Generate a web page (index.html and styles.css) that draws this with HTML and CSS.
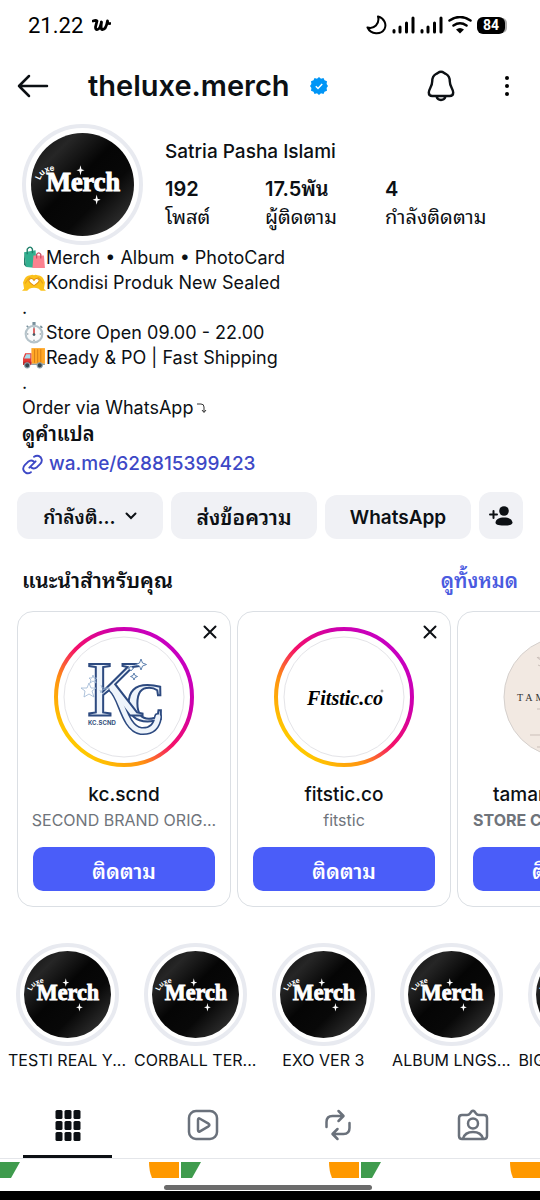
FILE: index.html
```html
<!DOCTYPE html>
<html lang="th">
<head>
<meta charset="utf-8">
<meta name="viewport" content="width=device-width, initial-scale=1">
<title>theluxe.merch</title>
<link rel="stylesheet" href="styles.css">
</head>
<body>
<svg class="defs" width="0" height="0" aria-hidden="true">
  <defs>
    <linearGradient id="story" x1="0.15" y1="0.85" x2="0.85" y2="0.15">
      <stop offset="0" stop-color="#ffc800"/><stop offset="0.25" stop-color="#ff9210"/>
      <stop offset="0.5" stop-color="#f5106a"/><stop offset="0.78" stop-color="#d000a8"/><stop offset="1" stop-color="#c800c0"/>
    </linearGradient>
    <linearGradient id="ink" x1="0" y1="0" x2="1" y2="1">
      <stop offset="0" stop-color="#0c0c0c"/><stop offset="0.22" stop-color="#262626"/><stop offset="0.45" stop-color="#050505"/>
      <stop offset="0.65" stop-color="#080808"/><stop offset="0.85" stop-color="#292929"/><stop offset="1" stop-color="#151515"/>
    </linearGradient>
    <symbol id="merch" viewBox="0 0 102 102">
      <circle cx="51" cy="51" r="51" fill="url(#ink)"/>
      <path id="arc" d="M9 47Q12 36 30 37" fill="none"/>
      <text class="logo-luxe"><textPath href="#arc">Luxe</textPath></text>
      <text class="logo-merch" x="15" y="57">Merch</text>
      <path d="M49 32l1 4 3 1-3 1-1 4-1-4-3-1 3-1zM65 61l1 4 3 1-3 1-1 4-1-4-3-1 3-1z" fill="#fff"/>
    </symbol>
    <symbol id="close" viewBox="0 0 14 14"><path d="M1.500 1.500l11 11M12.500 1.500l-11 11" fill="none" stroke="#0c1014" stroke-width="2" stroke-linecap="round"/></symbol>
    <symbol id="bars" viewBox="0 0 23 18"><path d="M2 14.500v1.500M8 11v5M14.500 7v9M21 2v14" stroke="#000" stroke-width="3" stroke-linecap="round"/></symbol>
  </defs>
</svg>
<div class="app">
  <div class="status">
    <span class="clock">21.22</span>
    <svg class="carrier" width="19" height="13" viewBox="0 0 19 13"><path d="M1 2q3-1 4 0L3.500 8q0 3 2 2.500Q8 10 9.500 3 8.500 10 10 10.500 14 11 15.500 2q0 3 2.500 2.500" fill="none" stroke="#000" stroke-width="2.800" stroke-linecap="round" stroke-linejoin="round"/></svg>
    <div class="status-icons">
      <svg width="21" height="20" viewBox="0 0 21 20"><path d="M12 1.500C18 3 21 9 18.500 14 15 20 5 20 1.500 12.500 8 14.500 14 9 12 1.500z" fill="none" stroke="#000" stroke-width="2" stroke-linejoin="round"/></svg>
      <svg width="23" height="18"><use href="#bars"/></svg>
      <svg width="23" height="18"><use href="#bars"/></svg>
      <svg width="24" height="18" viewBox="0 0 24 18"><path d="M1.500 4.500Q12-2.500 22.500 4.500M5.500 9.500Q12 5 18.500 9.500" fill="none" stroke="#000" stroke-width="2.500" stroke-linecap="round"/><path d="M8 13.500q4-3 8 0L12 17.500z"/></svg>
      <span class="battery">84</span>
    </div>
  </div>

  <header class="topbar">
    <button class="icon-btn" aria-label="Back"><svg width="32" height="24" viewBox="0 0 32 24"><path d="M12 2L2 12l10 10M2 12h28" fill="none" stroke="#0c1014" stroke-width="2.500" stroke-linecap="round" stroke-linejoin="round"/></svg></button>
    <h1 class="handle">theluxe.merch</h1>
    <svg class="verified" width="18" height="18" viewBox="0 0 18 18"><path d="M9 0l2 1.700L13.500.900l1 2.400 2.500.900-.400 2.700L18 9l-1.400 2.100.400 2.700-2.500.900-1 2.400-2.500-.800L9 18l-2-1.700-2.500.800-1-2.400-2.500-.900.400-2.700L0 9l1.400-2.100L1 4.200l2.500-.900 1-2.400L7 1.700z" fill="#0095f6"/><path d="M5.800 9.300l2.200 2.200 4.200-4.600" fill="none" stroke="#fff" stroke-width="1.500"/></svg>
    <button class="icon-btn bell" aria-label="Notifications"><svg width="28" height="32" viewBox="0 0 28 32"><path d="M14 1.800C11.500 1.800 11 3.200 9 4 6.200 5.500 5.200 8 5.200 11.500 5.200 16.500 1.800 19 1.800 22.500c0 2 1 3.500 3.500 3.500h17.400c2.500 0 3.500-1.500 3.500-3.500 0-3.500-3.400-6-3.400-11 0-3.500-1-6-3.800-7.500C17 3.200 16.500 1.800 14 1.800zM9.500 26.500q1 3.500 4.500 3.500t4.500-3.500" fill="none" stroke="#0c1014" stroke-width="2.400" stroke-linejoin="round"/></svg></button>
    <button class="icon-btn" aria-label="More"><svg width="6" height="22" viewBox="0 0 6 22"><circle cx="3" cy="3" r="2"/><circle cx="3" cy="11" r="2"/><circle cx="3" cy="19" r="2"/></svg></button>
  </header>

  <section class="profile">
    <div class="avatar"><svg viewBox="0 0 102 102"><use href="#merch"/></svg></div>
    <div class="facts">
      <h2 class="name">Satria Pasha Islami</h2>
      <dl class="stats">
        <div class="stat"><dd>192</dd><dt>โพสต์</dt></div>
        <div class="stat"><dd>17.5พัน</dd><dt>ผู้ติดตาม</dt></div>
        <div class="stat"><dd>4</dd><dt>กำลังติดตาม</dt></div>
      </dl>
    </div>
  </section>

  <section class="bio">
    <p><svg class="emoji" viewBox="0 0 23 22"><path d="M2 6l11-2 1 17-10-1z" fill="#32b090"/><path d="M2 6l2 14-2-2z" fill="#187862"/><path d="M5 8V3q3-4 5 0v4" fill="none" stroke="#20806a" stroke-width="1.300"/><path d="M11 9h10l1 12H10z" fill="#fb8290"/><path d="M14 12V8q2-3 4 0v4" fill="none" stroke="#c94d62" stroke-width="1.200"/></svg>Merch • Album • PhotoCard</p>
    <p><svg class="emoji" viewBox="0 0 23 22"><path d="M1 11Q3 4 8 4q2-1 3.500 0Q13 3 15 4q5 0 7 7l-1 6 2 2h-5l-2-2q-4.500-2-9 0l-2 2H0l2-2z" fill="#fcc21b"/><path d="M11.500 14Q5 10 7 8q2.500-2 4.500 1 2-3 4.500-1 2 2-4.500 6z" fill="#fff" stroke="#e39210"/><path d="M3 12q2-4 5-6M20 12q-2-4-5-6" fill="none" stroke="#e8a01b"/></svg>Kondisi Produk New Sealed</p>
    <p>.</p>
    <p><svg class="emoji" viewBox="0 0 23 22"><path d="M10 1h3v3h-3zM4 5l1-1 2 2-1 1zM17 6l1-2 2 2-1 1z" fill="#78909c"/><circle cx="11.500" cy="12.500" r="8" fill="#fafafa" stroke="#b5c3ca" stroke-width="2"/><path d="M11.500 7v6" stroke="#d43c3c" stroke-width="1.500"/><path d="M11.500 6v1M11.500 18v1M5 12.500h1M17 12.500h1" stroke="#455a64"/><circle cx="11.500" cy="13" r="1.300" fill="#455a64"/></svg>Store Open 09.00 - 22.00</p>
    <p><svg class="emoji" viewBox="0 0 23 22"><path d="M9 2h13v15H9z" fill="#ffa726"/><path d="M12 3v13M15 3v13M18 3v13" stroke="#d98218"/><path d="M3 7h6v11H1v-6z" fill="#e53935"/><path d="M4 8h4v4H2z" fill="#a7dbea"/><path d="M1 15h8v3H1z" fill="#c62828"/><path d="M9 17h13v1H9z" fill="#78909c"/><g fill="#37474f" stroke="#90a4ae"><circle cx="5" cy="18.500" r="2.500"/><circle cx="17" cy="18.500" r="2.500"/></g></svg>Ready &amp; PO | Fast Shipping</p>
    <p>.</p>
    <p>Order via WhatsApp<svg class="turn" width="12" height="12" viewBox="0 0 12 12"><path d="M2 2h4q3 0 3 3v5M7 8l2 2.500L11 8" fill="none" stroke="#333" stroke-width="1"/></svg></p>
    <button class="translate">ดูคำแปล</button>
    <a class="site" href="#"><svg width="21" height="21" viewBox="0 0 20 20"><path d="M8.500 17.300C5.500 19.500 2 18 1.300 15c-.5-2 .4-3.500 1.500-4.600l2.700-2.700C7.500 6 9.500 6 11 7M11.500 2.700C14.500.5 18 2 18.700 5c.5 2-.4 3.500-1.500 4.600l-2.700 2.700c-2 1.700-4 1.700-5.500.7M7 13l6-6" fill="none" stroke="#3d48c6" stroke-width="1.800" stroke-linecap="round"/></svg>wa.me/628815399423</a>
  </section>

  <div class="actions">
    <button class="btn">กำลังติ...<svg class="chevron" width="12" height="8" viewBox="0 0 12 8"><path d="M1.500 1.500L6 6l4.500-4.500" fill="none" stroke="#0c1014" stroke-width="2" stroke-linecap="round"/></svg></button>
    <button class="btn btn-message">ส่งข้อความ</button>
    <button class="btn btn-short">WhatsApp</button>
    <button class="btn btn-square" aria-label="Suggestions"><svg width="24" height="20" viewBox="0 0 24 20"><circle cx="15" cy="5" r="4.800" fill="#0c1014"/><path d="M6.500 16.500C7 13 10 11.500 15 11.500s8 1.500 8.500 5c0 2-2 3-8.500 3s-8.500-1-8.500-3z" fill="#0c1014"/><path d="M4.500 5v7M1 8.500h7" stroke="#0c1014" stroke-width="2" stroke-linecap="round"/></svg></button>
  </div>

  <div class="section-head">
    <h2 class="section-title">แนะนำสำหรับคุณ</h2>
    <a class="see-all" href="#">ดูทั้งหมด</a>
  </div>

  <div class="cards">
    <article class="card">
      <button class="dismiss" aria-label="Dismiss"><svg width="14" height="14"><use href="#close"/></svg></button>
      <svg class="portrait" viewBox="0 0 140 140"><circle cx="70" cy="70" r="68" fill="#fff" stroke="url(#story)" stroke-width="4"/><circle cx="70" cy="70" r="60" fill="#fff" stroke="#e4e4e8"/>
        <path d="M58 62C68 70 70 101 87 104q15 1 17-14" fill="none" stroke="#2d4a80" stroke-width="8" stroke-linecap="round"/>
        <text class="kc kc-c" x="72" y="94">C</text><text class="kc kc-k" x="33" y="88">K</text>
        <path d="M58 62C68 70 70 101 87 104q15 1 17-14" fill="none" stroke="#eef4fb" stroke-width="5" stroke-linecap="round"/>
        <text class="kc-sub" x="34" y="98">KC.SCND</text>
        <g fill="#fff" stroke="#5c7fae"><path d="M87 32l1.500 4 4 1.500-4 1.500L87 43l-1.500-4-4-1.500 4-1.500z"/><path d="M80 46l1 2.500 2.500 1-2.500 1-1 2.500-1-2.500-2.500-1 2.500-1z"/><path d="M77 39l1 1.500 1.500 1-1.500 1-1 1.500-1-1.500-1.500-1 1.500-1z"/></g>
        <path d="M35 56l2 5 5 0-4 3 2 6-5-3-5 3 1-6-4-3 6 0zM39 48l1 3 3 0-2 2 1 3-3-2-3 2 1-3-2-2 3 0zM47 58l1 3 7 0-7 2-1 3-1-3" fill="none" stroke="#9cb5d3" stroke-width=".8"/></svg>
      <h3 class="card-name">kc.scnd</h3>
      <p class="card-sub">SECOND BRAND ORIG...</p>
      <button class="follow">ติดตาม</button>
    </article>
    <article class="card">
      <button class="dismiss" aria-label="Dismiss"><svg width="14" height="14"><use href="#close"/></svg></button>
      <svg class="portrait" viewBox="0 0 140 140"><circle cx="70" cy="70" r="68" fill="#fff" stroke="url(#story)" stroke-width="4"/><circle cx="70" cy="70" r="60" fill="#fff" stroke="#e4e4e8"/><text class="fitstic" x="71" y="78">Fitstic.co</text><circle cx="108" cy="64" r="1" fill="none" stroke="#333" stroke-width=".5"/></svg>
      <h3 class="card-name">fitstic.co</h3>
      <p class="card-sub">fitstic</p>
      <button class="follow">ติดตาม</button>
    </article>
    <article class="card">
      <svg class="portrait" viewBox="0 0 140 140"><circle cx="70" cy="70" r="60" fill="#f2e9e2" stroke="#d5d0cd"/><path d="M43 30q3 5 8 0M44 38l7 3M44 30l6 4M43 82h54M36 108h68M43 120h54" fill="none" stroke="#cbbfb9"/><text class="tamara" x="23" y="74">TAMARA</text></svg>
      <h3 class="card-name">tamara.clothing</h3>
      <p class="card-sub card-sub-bold">STORE CLOTHING BRAND</p>
      <button class="follow">ติดตาม</button>
    </article>
  </div>

  <div class="highlights">
    <a class="highlight" href="#"><span class="ring"><svg viewBox="0 0 102 102"><use href="#merch"/></svg></span><span>TESTI REAL Y...</span></a>
    <a class="highlight" href="#"><span class="ring"><svg viewBox="0 0 102 102"><use href="#merch"/></svg></span><span>CORBALL TER...</span></a>
    <a class="highlight" href="#"><span class="ring"><svg viewBox="0 0 102 102"><use href="#merch"/></svg></span><span>EXO VER 3</span></a>
    <a class="highlight" href="#"><span class="ring"><svg viewBox="0 0 102 102"><use href="#merch"/></svg></span><span>ALBUM LNGS...</span></a>
    <a class="highlight" href="#"><span class="ring"><svg viewBox="0 0 102 102"><use href="#merch"/></svg></span><span>BIGBANG VER 3</span></a>
  </div>

  <nav class="tabs">
    <button class="tab tab-active" aria-label="Grid"><svg width="26" height="32" viewBox="0 0 26 32"><g fill="#0c1014"><rect x="0.500" y="1" width="7" height="9" rx="1.500"/><rect x="9.500" y="1" width="7" height="9" rx="1.500"/><rect x="18.500" y="1" width="7" height="9" rx="1.500"/><rect x="0.500" y="12" width="7" height="9" rx="1.500"/><rect x="9.500" y="12" width="7" height="9" rx="1.500"/><rect x="18.500" y="12" width="7" height="9" rx="1.500"/><rect x="0.500" y="23" width="7" height="9" rx="1.500"/><rect x="9.500" y="23" width="7" height="9" rx="1.500"/><rect x="18.500" y="23" width="7" height="9" rx="1.500"/></g></svg></button>
    <button class="tab" aria-label="Reels"><svg width="32" height="32" viewBox="0 0 32 32"><rect x="2" y="2" width="28" height="28" rx="7"/><path d="M11 11q0-2.500 2-1.300l8.500 5q1.800 1.300 0 2.600l-8.500 5q-2 1.200-2-1.300z"/></svg></button>
    <button class="tab" aria-label="Reposts"><svg width="28" height="32" viewBox="0 0 28 32"><path d="M2.500 18v-5q0-6 6-6H19M14.500 2l5 5-5 5M25.500 14v5q0 6-6 6H9M13.500 20l-5 5 5 5"/></svg></button>
    <button class="tab" aria-label="Tagged"><svg width="32" height="32" viewBox="0 0 32 32"><path d="M5 6h5q2 0 3-1.500l1.500-2q1.500-1.500 3 0l1.500 2Q20 6 22 6h5q3 0 3 3v18q0 3-3 3H5q-3 0-3-3V9q0-3 3-3z"/><circle cx="16" cy="14.500" r="5"/><path d="M6 29.500q2-6.500 10-6.500t10 6.500"/></svg></button>
  </nav>

  <div class="posts">
    <div class="post"><svg width="20" height="16" viewBox="0 0 20 16"><path d="M0 0h20l-9 16H0z" fill="#3f9b4d"/></svg><svg width="30" height="16" viewBox="0 0 30 16"><path d="M0 0h30v16H3Q0 9 0 0z" fill="#ff9900"/></svg></div>
    <div class="post"><svg width="20" height="16" viewBox="0 0 20 16"><path d="M0 0h20l-9 16H0z" fill="#3f9b4d"/></svg><svg width="30" height="16" viewBox="0 0 30 16"><path d="M0 0h30v16H3Q0 9 0 0z" fill="#ff9900"/></svg></div>
    <div class="post"><svg width="20" height="16" viewBox="0 0 20 16"><path d="M0 0h20l-9 16H0z" fill="#3f9b4d"/></svg><svg width="30" height="16" viewBox="0 0 30 16"><path d="M0 0h30v16H3Q0 9 0 0z" fill="#ff9900"/></svg></div>
  </div>
  <div class="home"><span class="home-bar"></span></div>
</div>
</body>
</html>
```

FILE: styles.css
```css
* { box-sizing: border-box; margin: 0; padding: 0; }
body { background: #fff; color: #0c1014; font-family: Inter, "Noto Sans Thai Looped", "Noto Sans Thai", "Noto Sans", sans-serif; font-size: 18px; overflow-x: hidden; }
button { border: 0; background: none; font: inherit; color: inherit; display: flex; align-items: center; justify-content: center; }
a { color: inherit; text-decoration: none; }
svg { flex: none; display: block; }
.defs { position: absolute; }
.app { display: flex; flex-direction: column; min-height: 100vh; overflow: hidden; }

.status { display: flex; align-items: center; height: 50px; padding: 0 35px 0 28px; color: #000; }
.clock { font-family: Roboto, sans-serif; font-size: 22px; }
.carrier { margin-left: 9px; }
.status-icons { margin-left: auto; display: flex; align-items: center; gap: 5px; }
.battery { background: #000; color: #fff; font: bold 14px/17px Roboto, sans-serif; width: 28px; border-radius: 6px; text-align: center; box-shadow: 3px 0 0 -1px #aaa; }

.topbar { display: flex; align-items: center; height: 72px; padding: 0 30px 0 17px; }
.handle { font-size: 29px; font-weight: 600; margin-left: 39px; line-height: 36px; }
.verified { margin-left: 20px; }
.bell { margin-left: auto; margin-right: 49px; }

.profile { display: flex; gap: 22px; padding: 2px 22px 0; }
.avatar { width: 121px; height: 121px; flex: none; border: 4px solid #e8eaf0; border-radius: 50%; padding: 5px; }
.logo-merch { font: bold 26px "Liberation Serif", serif; fill: #fff; stroke: #fff; stroke-width: 1px; }
.logo-luxe { font: bold 8px Inter, sans-serif; fill: #fff; }
.facts { flex: 1; padding-top: 16px; }
.name { font-size: 19px; font-weight: 500; line-height: 24px; }
.stats { display: flex; padding-top: 11px; }
.stat { display: flex; flex-direction: column; min-width: 100px; }
.stat:nth-child(2) { min-width: 120px; }
.stat dd { font-size: 20px; font-weight: 600; line-height: 28px; }
.stat dt { font-size: 20px; line-height: 28px; }

.bio { padding: 0 22px; font-size: 18px; line-height: 25px; }
.bio p { display: flex; align-items: center; }
.emoji { width: 24px; height: 23px; }
.turn { margin-left: 2px; }
.translate { font-size: 20px; font-weight: 600; line-height: 28px; }
.site { display: flex; align-items: center; gap: 6px; font-size: 19px; line-height: 32px; color: #3d48c6; font-weight: 500; }

.actions { display: flex; align-items: flex-end; gap: 8px; padding: 12px 17px 0; }
.btn { flex: 1; min-width: 0; height: 47px; border-radius: 12px; background: #f0f1f5; font-size: 19px; font-weight: 600; white-space: nowrap; }
.btn-message { font-size: 21px; }
.btn-short { height: 44px; font-weight: 600; }
.btn-square { flex: 0 0 44px; height: 47px; }
.chevron { margin-left: 9px; }

.section-head { display: flex; justify-content: space-between; align-items: center; padding: 26px 22px 0; font-size: 20px; line-height: 32px; font-weight: 600; }
.section-title { font-size: 21px; font-weight: 600; }
.see-all { color: #4a5be0; }

.cards { display: flex; gap: 6px; padding: 14px 17px 0; overflow: hidden; }
.card { position: relative; flex: 0 0 214px; min-width: 0; border: 1px solid #dbdfe4; border-radius: 16px; padding: 15px; display: flex; flex-direction: column; align-items: center; white-space: nowrap; }
.portrait { width: 140px; height: 140px; }
.dismiss { position: absolute; top: 13px; right: 13px; }
.card-name { font-size: 19px; font-weight: 500; line-height: 26px; margin-top: 15px; }
.card-sub { font-size: 16px; line-height: 24px; color: #6f747b; }
.card-sub-bold { font-weight: 700; max-width: 100%; overflow: hidden; text-overflow: ellipsis; }
.follow { align-self: stretch; height: 44px; margin-top: 15px; border-radius: 10px; background: #4a5df9; color: #fff; font-size: 21px; font-weight: 600; }
.kc { font-family: "Liberation Serif", serif; font-weight: bold; fill: #eef4fb; stroke: #2d4a80; stroke-width: 2px; }
.kc-k { font-size: 78px; font-weight: normal; }
.kc-c { font-size: 54px; }
.kc-sub { font: bold 6px Inter, sans-serif; fill: #34507c; }
.fitstic { font: italic bold 20px "Liberation Serif", serif; text-anchor: middle; }
.tamara { font: 10px "Liberation Serif", serif; fill: #333; letter-spacing: 3px; }

.highlights { display: flex; gap: 6px; padding: 36px 6px 0; overflow: hidden; }
.highlight { flex: 0 0 122px; display: flex; flex-direction: column; align-items: center; font-size: 16px; line-height: 28px; white-space: nowrap; }
.ring { width: 103px; height: 103px; border: 4px solid #e8eaf0; border-radius: 50%; padding: 4px; }

.tabs { display: flex; margin-top: 18px; border-bottom: 1px solid #e4e6ea; }
.tab { flex: 1; height: 66px; position: relative; }
.tab svg { fill: none; stroke: #6a717b; stroke-width: 2.500px; stroke-linecap: round; stroke-linejoin: round; }
.tab-active svg { stroke: none; }
.tab-active::after { content: ""; position: absolute; left: 17%; right: 17%; bottom: 0; height: 3px; background: #0c1014; }

.posts { display: flex; gap: 2px; flex: 1; padding-top: 3px; }
.post { flex: 1; display: flex; justify-content: space-between; }
.home { display: flex; justify-content: center; padding: 7px 4px 1px 0; border-bottom: 9px solid #000; }
.home-bar { width: 208px; height: 5px; border-radius: 3px; background: #6b6b6b; }
```
